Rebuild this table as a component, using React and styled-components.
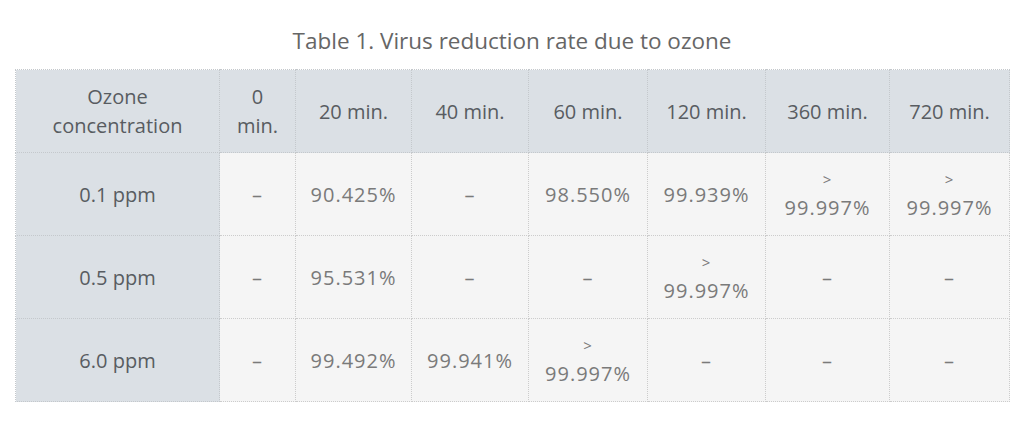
import React from "react"
import styled, { createGlobalStyle } from "styled-components"

const GlobalStyle = createGlobalStyle`
  html, body {
    margin: 0;
    padding: 0;
    background: #ffffff;
  }
  body {
    font-family: "Open Sans", "Liberation Sans", sans-serif;
  }
`

const Page = styled.div`
  width: 1024px;
  height: 428px;
  box-sizing: border-box;
  padding: 26px 15px 0 15px;
`

const Caption = styled.h2`
  margin: 0 0 13px;
  text-align: center;
  font-size: 22.5px;
  font-weight: 400;
  line-height: 30px;
  color: #666;
`

const Table = styled.table`
  width: 994px;
  table-layout: fixed;
  border-collapse: collapse;
  font-size: 20px;
  line-height: 29px;
  text-align: center;
`

const HeadCell = styled.th`
  height: 82px;
  padding: 0 14px;
  font-weight: 400;
  color: #585c61;
  background: #dbe0e5;
  border: 1px dotted #c4c8cc;
  vertical-align: middle;
`

const RowHead = styled.th`
  height: 82px;
  padding: 0 14px;
  font-weight: 400;
  color: #585c61;
  background: #dbe0e5;
  border: 1px dotted #c4c8cc;
`

const Cell = styled.td`
  height: 82px;
  padding: 0 12px;
  color: #7a7a7a;
  background: #f5f5f5;
  border: 1px dotted #cccccc;
  vertical-align: middle;
  letter-spacing: 1px;
`

const Prefix = styled.span`
  display: block;
  font-size: 15px;
  line-height: 27px;
`

const columns = [
  { label: "Ozone concentration", width: 204 },
  { label: "0 min.", width: 76 },
  { label: "20 min.", width: 116 },
  { label: "40 min.", width: 117 },
  { label: "60 min.", width: 119 },
  { label: "120 min.", width: 118 },
  { label: "360 min.", width: 124 },
  { label: "720 min.", width: 120 },
]

const rows = [
  ["0.1 ppm", "–", "90.425%", "–", "98.550%", "99.939%", "> 99.997%", "> 99.997%"],
  ["0.5 ppm", "–", "95.531%", "–", "–", "> 99.997%", "–", "–"],
  ["6.0 ppm", "–", "99.492%", "99.941%", "> 99.997%", "–", "–", "–"],
]

const Value = ({ v }) =>
  v.startsWith("> ") ? (
    <>
      <Prefix>&gt;</Prefix>
      {v.slice(2)}
    </>
  ) : (
    v
  )

const App = () => (
  <Page>
    <GlobalStyle />
    <Caption>Table 1. Virus reduction rate due to ozone</Caption>
    <Table>
      <colgroup>
        {columns.map(c => (
          <col key={c.label} style={{ width: c.width }} />
        ))}
      </colgroup>
      <thead>
        <tr>
          {columns.map(c => (
            <HeadCell key={c.label}>{c.label}</HeadCell>
          ))}
        </tr>
      </thead>
      <tbody>
        {rows.map(row => (
          <tr key={row[0]}>
            <RowHead scope="row">{row[0]}</RowHead>
            {row.slice(1).map((v, i) => (
              <Cell key={i}>
                <Value v={v} />
              </Cell>
            ))}
          </tr>
        ))}
      </tbody>
    </Table>
  </Page>
)

export default App
